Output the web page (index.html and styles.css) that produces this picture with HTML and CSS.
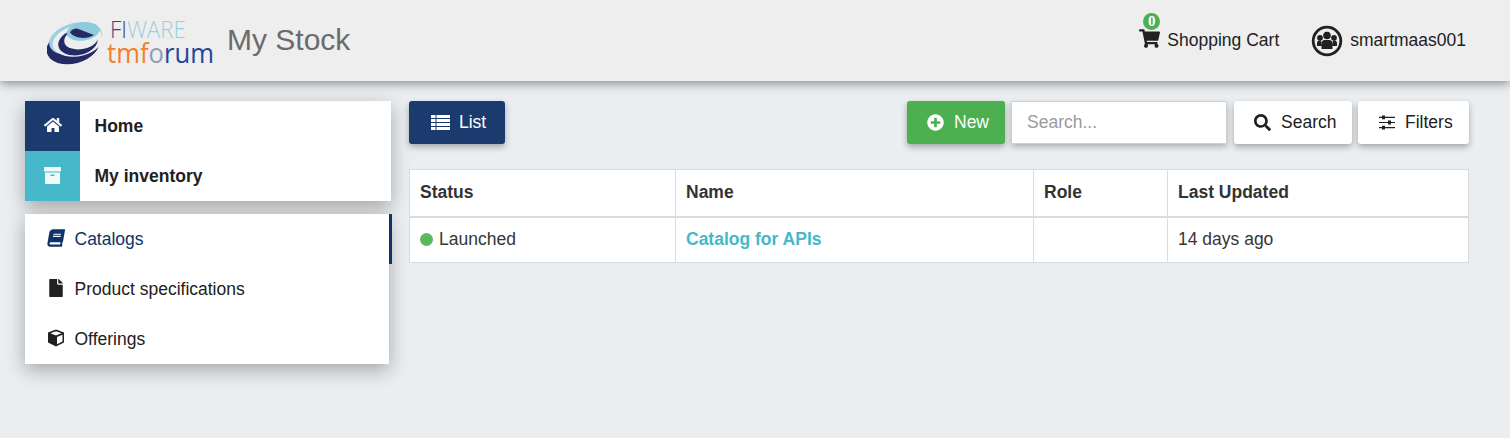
FILE: index.html
```html
<!DOCTYPE html>
<html lang="en">
<head>
    <meta charset="UTF-8">
    <meta name="viewport" content="width=device-width, initial-scale=1.0">
    <title>My Stock</title>
    <link rel="stylesheet" href="styles.css">
</head>
<body>
    <header class="topbar">
        <div class="brand">
            <svg class="logo" viewBox="0 -10 180 64" width="180" height="64">
                <ellipse cx="26" cy="27" rx="27" ry="17.500" transform="rotate(-15 26 27)" fill="#232a66"/>
                <ellipse cx="32" cy="22" rx="25" ry="15" transform="rotate(-15 32 22)" fill="#eeeeee"/>
                <ellipse cx="28.500" cy="19.500" rx="27" ry="15.500" transform="rotate(-15 28.500 19.500)" fill="#9bd0e0"/>
                <ellipse cx="30" cy="21" rx="25" ry="14.500" transform="rotate(-15 30 21)" fill="#eeeeee"/>
                <ellipse cx="31" cy="23" rx="20" ry="13" transform="rotate(-12 31 23)" fill="#232a66"/>
                <ellipse cx="34.500" cy="19.500" rx="17.500" ry="10.500" transform="rotate(-12 34.500 19.500)" fill="#eeeeee"/>
                <ellipse cx="36" cy="12.500" rx="16.500" ry="9" transform="rotate(-8 36 12.500)" fill="#8fcbdc"/>
                <path d="M23 13.500C24 11 27 9.500 30 9.500L47 16C40 20.500 28 20 23 13.500Z" fill="#232a66"/>
                <text class="logo-fi" x="63" y="19" textLength="76" lengthAdjust="spacingAndGlyphs"><tspan fill="#3f4379">FI</tspan><tspan fill="#9bcfdf">WARE</tspan></text>
                <text class="logo-tm" x="60" y="44" textLength="107" lengthAdjust="spacingAndGlyphs"><tspan fill="#f47f2b">tmf</tspan><tspan fill="#8f9fb0">o</tspan><tspan fill="#21479c">rum</tspan></text>
            </svg>
            <span class="page-title">My Stock</span>
        </div>
        <nav class="usernav">
            <a class="cart">
                <span class="badge">0</span>
                <svg class="icon cart-icon" viewBox="0 0 576 512"><path d="M528.12 301.319l47.273-208C578.806 78.301 567.391 64 551.99 64H159.208l-9.166-44.81C147.758 8.021 137.93 0 126.529 0H24C10.745 0 0 10.745 0 24v16c0 13.255 10.745 24 24 24h69.883l70.248 343.435C147.325 417.1 136 435.222 136 456c0 30.928 25.072 56 56 56s56-25.072 56-56c0-15.674-6.447-29.835-16.824-40h209.647C430.447 426.165 424 440.326 424 456c0 30.928 25.072 56 56 56s56-25.072 56-56c0-22.172-12.888-41.332-31.579-50.405l5.517-24.276c3.413-15.018-8.002-29.319-23.403-29.319H218.117l-6.545-32h293.145c11.206 0 20.92-7.754 23.403-18.681z"/></svg>
                Shopping Cart
            </a>
            <a class="user">
                <svg class="avatar" viewBox="0 0 32 32">
                    <circle cx="16" cy="16" r="13.800" fill="none" stroke="#212121" stroke-width="2.800"/>
                    <circle cx="16" cy="10.500" r="3.800" fill="#212121"/>
                    <circle cx="9" cy="12.800" r="2.900" fill="#212121"/>
                    <circle cx="23" cy="12.800" r="2.900" fill="#212121"/>
                    <path d="M6 21v-3c0-1.500 1-2.500 2.500-2.500H10l1 5.500zM26 21v-3c0-1.500-1-2.500-2.500-2.500H22l-1 5.500z" fill="#212121"/>
                    <path d="M10.500 24v-5.500c0-2 1.500-3.500 3-3.500h5c1.500 0 3 1.500 3 3.500V24z" fill="#212121"/>
                </svg>
                smartmaas001
            </a>
        </nav>
    </header>

    <div class="layout">
        <aside class="sidebar">
            <ul class="card mainmenu">
                <li class="mainmenu-item">
                    <span class="mainmenu-icon navy">
                        <svg class="icon" viewBox="0 0 576 512"><path d="M280.37 148.26L96 300.11V464a16 16 0 0 0 16 16l112.06-.29a16 16 0 0 0 15.92-16V368a16 16 0 0 1 16-16h64a16 16 0 0 1 16 16v95.64a16 16 0 0 0 16 16.05L464 480a16 16 0 0 0 16-16V300L295.67 148.26a12.19 12.19 0 0 0-15.3 0zM571.6 251.47L488 182.56V44.05a12 12 0 0 0-12-12h-56a12 12 0 0 0-12 12v72.61L318.47 43a48 48 0 0 0-61 0L4.34 251.47a12 12 0 0 0-1.6 16.9l25.5 31A12 12 0 0 0 45.15 301l235.22-193.74a12.19 12.19 0 0 1 15.3 0L530.9 301a12 12 0 0 0 16.9-1.6l25.5-31a12 12 0 0 0-1.7-16.93z"/></svg>
                    </span>
                    Home
                </li>
                <li class="mainmenu-item">
                    <span class="mainmenu-icon teal">
                        <svg class="icon archive-icon" viewBox="0 0 17 17"><path fill-rule="evenodd" d="M.5 0h16a.5.500 0 0 1 .5.500V4.500H0V.5A.5.500 0 0 1 .5 0zM1 5.500h15v11a.5.500 0 0 1-.5.500h-14a.5.500 0 0 1-.5-.500zM6.500 7.500v1.500h4V7.500z"/></svg>
                    </span>
                    My inventory
                </li>
            </ul>
            <ul class="card submenu">
                <li class="submenu-item active">
                    <svg class="icon sub-icon" viewBox="-40 0 528 512"><path transform="skewX(-10) translate(45 0)" d="M448 360V24c0-13.300-10.700-24-24-24H96C43 0 0 43 0 96v320c0 53 43 96 96 96h328c13.300 0 24-10.700 24-24v-16c0-7.500-3.500-14.300-8.900-18.700-4.200-15.400-4.200-59.300 0-74.700 5.400-4.300 8.900-11.100 8.900-18.600zM128 134c0-3.300 2.700-6 6-6h212c3.300 0 6 2.700 6 6v20c0 3.300-2.700 6-6 6H134c-3.300 0-6-2.700-6-6v-20zm0 64c0-3.300 2.700-6 6-6h212c3.300 0 6 2.700 6 6v20c0 3.300-2.700 6-6 6H134c-3.300 0-6-2.700-6-6v-20zm253.400 250H96c-17.700 0-32-14.300-32-32 0-17.600 14.400-32 32-32h285.400c-1.900 17.100-1.900 46.900 0 64z"/></svg>
                    Catalogs
                </li>
                <li class="submenu-item">
                    <svg class="icon sub-icon" viewBox="0 0 384 512"><path d="M224 136V0H24C10.700 0 0 10.700 0 24v464c0 13.300 10.700 24 24 24h336c13.300 0 24-10.700 24-24V160H248c-13.200 0-24-10.800-24-24zm160-14.100v6.100H256V0h6.100c6.400 0 12.500 2.500 17 7l97.900 98c4.500 4.500 7 10.600 7 16.900z"/></svg>
                    Product specifications
                </li>
                <li class="submenu-item">
                    <svg class="icon sub-icon" viewBox="0 0 18 18"><path fill-rule="evenodd" d="M9 .5l8 3v10l-8 4-8-4v-10zM9 2.200L3.400 4.300 9 6.500l5.600-2.200zM10 8v7.300l5.500-2.700V5.800z"/></svg>
                    Offerings
                </li>
            </ul>
        </aside>

        <main class="content">
            <div class="toolbar">
                <button class="btn btn-navy" type="button">
                    <svg class="icon btn-icon list-icon" viewBox="0 0 19 15">
                        <path d="M0 0h4.500v3H0zM5.500 0H19v3H5.500zM0 4h4.500v3H0zM5.500 4H19v3H5.500zM0 8h4.500v3H0zM5.500 8H19v3H5.500zM0 12h4.500v3H0zM5.500 12H19v3H5.500z"/>
                    </svg>
                    List
                </button>
                <div class="toolbar-right">
                    <button class="btn btn-green" type="button">
                        <svg class="icon btn-icon" viewBox="0 0 512 512"><path d="M256 8C119 8 8 119 8 256s111 248 248 248 248-111 248-248S393 8 256 8zm144 276c0 6.600-5.400 12-12 12h-92v92c0 6.600-5.400 12-12 12h-56c-6.600 0-12-5.400-12-12v-92h-92c-6.600 0-12-5.400-12-12v-56c0-6.600 5.400-12 12-12h92v-92c0-6.600 5.400-12 12-12h56c6.600 0 12 5.400 12 12v92h92c6.600 0 12 5.400 12 12v56z"/></svg>
                        New
                    </button>
                    <input class="search-input" type="text" placeholder="Search...">
                    <button class="btn btn-white btn-search" type="button">
                        <svg class="icon btn-icon" viewBox="0 0 512 512"><path d="M505 442.700L405.300 343c-4.500-4.500-10.600-7-17-7H372c27.600-35.300 44-79.700 44-128C416 93.100 322.900 0 208 0S0 93.100 0 208s93.100 208 208 208c48.300 0 92.700-16.400 128-44v16.300c0 6.400 2.500 12.500 7 17l99.700 99.700c9.400 9.400 24.600 9.400 33.900 0l28.300-28.300c9.400-9.400 9.400-24.600.1-34zM208 336c-70.700 0-128-57.200-128-128 0-70.700 57.200-128 128-128 70.700 0 128 57.200 128 128 0 70.700-57.200 128-128 128z"/></svg>
                        Search
                    </button>
                    <button class="btn btn-white btn-filters" type="button">
                        <svg class="icon btn-icon filters-icon" viewBox="0 0 16 15">
                            <path d="M0 1.800h3V.5h3v1.300h10V3H6v1.300H3V3H0zM0 6.900h9V5.600h3v1.300h4v1.200h-4v1.300H9V8.100H0zM0 12h3v-1.300h3V12h10v1.200H6v1.300H3v-1.300H0z"/>
                        </svg>
                        Filters
                    </button>
                </div>
            </div>

            <table class="stock-table">
                <thead>
                    <tr>
                        <th class="col-status">Status</th>
                        <th class="col-name">Name</th>
                        <th class="col-role">Role</th>
                        <th>Last Updated</th>
                    </tr>
                </thead>
                <tbody>
                    <tr>
                        <td><span class="dot"></span>Launched</td>
                        <td><a class="table-link">Catalog for APIs</a></td>
                        <td></td>
                        <td>14 days ago</td>
                    </tr>
                </tbody>
            </table>
        </main>
    </div>
</body>
</html>
```

FILE: styles.css
```css
* {
    box-sizing: border-box;
}
html, body {
    height: 100%;
    overflow: hidden;
}
body {
    margin: 0;
    background: #eaeef1;
    font-family: "Liberation Sans", Arial, sans-serif;
    font-size: 17.5px;
    color: #212121;
}
ul {
    list-style: none;
    margin: 0;
    padding: 0;
}
.icon {
    display: block;
    fill: currentColor;
}

/* header */
.topbar {
    height: 81px;
    background: #eeeeee;
    box-shadow: 0 2px 10px rgba(0, 0, 0, 0.45);
    display: flex;
    justify-content: space-between;
    align-items: center;
    padding: 0 44px 0 47px;
}
.brand {
    display: flex;
    align-items: center;
}
.logo {
    display: block;
}
.logo-fi {
    font-family: "Open Sans", sans-serif;
    font-size: 24px;
    font-weight: 300;
}
.logo-tm {
    font-family: "Open Sans", sans-serif;
    font-size: 28px;
    font-weight: 500;
}
.page-title {
    font-size: 30px;
    color: #6b6b6b;
    margin-top: -1px;
}
.usernav {
    display: flex;
    align-items: center;
    gap: 32px;
}
.cart, .user {
    display: flex;
    align-items: center;
    position: relative;
}
.cart-icon {
    width: 21px;
    height: 19px;
    margin-right: 7px;
    margin-top: -4px;
}
.badge {
    position: absolute;
    left: 4px;
    top: -17px;
    width: 17px;
    height: 17px;
    border-radius: 50%;
    background: #4caf50;
    color: #fff;
    font-family: "Liberation Serif", serif;
    font-weight: bold;
    font-size: 15px;
    line-height: 17px;
    text-align: center;
}
.avatar {
    display: block;
    width: 32px;
    height: 32px;
    margin-right: 7px;
}

/* page layout */
.layout {
    display: flex;
    gap: 18px;
    padding: 20px 41px 0 25px;
}
.sidebar {
    width: 366px;
    flex-shrink: 0;
}
.card {
    background: #fff;
    box-shadow: 0 6px 18px rgba(0, 0, 0, 0.3);
}
.mainmenu {
    margin-bottom: 13px;
}
.mainmenu-item {
    height: 50px;
    display: flex;
    align-items: center;
    font-weight: bold;
}
.mainmenu-icon {
    width: 55px;
    height: 50px;
    margin-right: 14.5px;
    display: flex;
    align-items: center;
    justify-content: center;
    color: #fff;
}
.mainmenu-icon .icon {
    width: 18px;
    height: 16px;
    margin-top: -3px;
}
.mainmenu-icon .archive-icon {
    width: 17px;
    height: 17px;
    margin-top: -1px;
    opacity: 0.92;
}
.navy {
    background: #1b3a6d;
}
.teal {
    background: #46b8c9;
}
.submenu {
    width: 364px;
}
.submenu-item {
    height: 50px;
    display: flex;
    align-items: center;
    padding-left: 22px;
}
.submenu-item.active {
    color: #0f3268;
    border-right: 3px solid #0f3268;
    margin-right: -3px;
}
.sub-icon {
    width: 18px;
    height: 18px;
    margin-right: 9.5px;
    margin-top: -2px;
}

/* toolbar */
.content {
    flex: 1;
    min-width: 0;
}
.toolbar {
    display: flex;
    justify-content: space-between;
    margin-bottom: 25px;
}
.toolbar-right {
    display: flex;
    gap: 6px;
}
.btn {
    height: 43px;
    border: none;
    border-radius: 3px;
    display: flex;
    align-items: center;
    gap: 10px;
    font-family: inherit;
    font-size: 17.5px;
    padding: 0 0 0 20px;
    box-shadow: 0 3px 6px rgba(0, 0, 0, 0.3);
}
.btn-icon {
    width: 17px;
    height: 17px;
    flex-shrink: 0;
}
.list-icon {
    width: 19px;
    height: 15px;
}
.filters-icon {
    width: 16px;
    height: 15px;
}
.btn-navy {
    width: 96px;
    padding-left: 22px;
    gap: 9px;
    background: #1b3a6d;
    color: #fff;
}
.btn-green {
    width: 98px;
    background: #4caf50;
    color: #fff;
}
.btn-white {
    background: #fff;
    color: #212121;
}
.btn-search {
    width: 118px;
    margin-left: 1px;
}
.btn-filters {
    width: 111px;
    padding-left: 21px;
}
.search-input {
    width: 216px;
    height: 43px;
    border: 1px solid #cfcfcf;
    background: #fff;
    padding: 0 15px;
    font-family: inherit;
    font-size: 17.5px;
    outline: none;
    box-shadow: 0 3px 6px rgba(0, 0, 0, 0.25);
}
.search-input::placeholder {
    color: #9b9b9b;
}

/* table */
.stock-table {
    width: 100%;
    table-layout: fixed;
    border-collapse: collapse;
    background: #fff;
    color: #363636;
}
.stock-table th, .stock-table td {
    border: 1px solid #dbdbdb;
    padding: 0 10px;
    text-align: left;
}
.stock-table th {
    height: 47px;
    border-bottom-width: 2px;
    color: #333333;
}
.stock-table td {
    height: 46px;
}
.col-status {
    width: 266px;
}
.col-name {
    width: 358px;
}
.col-role {
    width: 134px;
}
.dot {
    display: inline-block;
    width: 13px;
    height: 13px;
    border-radius: 50%;
    background: #5cb85c;
    margin-right: 6px;
    vertical-align: -1px;
}
.table-link {
    color: #46b8c9;
    font-weight: bold;
}
```
